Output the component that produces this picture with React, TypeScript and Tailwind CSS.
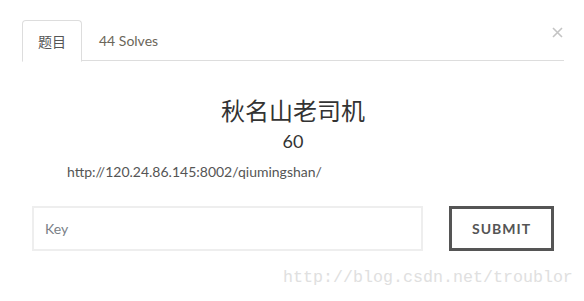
export default function App() {
  return (
    <div className="relative w-[584px] h-[301px] bg-white font-['Lato','Noto_Sans_CJK_SC',sans-serif] text-[#333]">
      {/* Close */}
      <button className="absolute left-[552px] top-[27px] w-[11px] h-[11px]" title="Close">
        <svg viewBox="0 0 11 11" className="w-[11px] h-[11px]">
          <path d="M1 1 L10 10 M10 1 L1 10" stroke="#c4c4c4" strokeWidth="1.6" />
        </svg>
      </button>

      <div className="pt-[20px] pl-[22px] pr-[20px]">
        {/* Tabs */}
        <div className="flex h-[41px] border-b border-[#ddd]">
          <div className="-mb-px flex h-[42px] items-center rounded-t-[4px] border border-[#ddd] border-b-white bg-white px-[15px] text-[14px] text-[#555]">
            题目
          </div>
          <div className="ml-[2px] flex h-[41px] items-center px-[15px] text-[14px] text-[#6b6659]">
            44 Solves
          </div>
        </div>

        {/* Challenge */}
        <div className="mt-[37px] text-center">
          <h3 className="text-[24px] leading-[26px] text-[#333]">秋名山老司机</h3>
          <h4 className="mt-[4px] text-[18px] leading-[27px] text-[#333]">60</h4>
        </div>
        <p className="mt-[7px] pl-[45px] text-[14px] leading-[20px] text-[#555]">
          http://120.24.86.145:8002/qiumingshan/
        </p>

        {/* Key form */}
        <div className="mt-[24px] flex items-start">
          <input
            className="ml-[10px] h-[45px] w-[391px] border-2 border-[#eee] px-[11px] text-[14px] text-[#555] outline-none placeholder:text-[#7a7f87]"
            placeholder="Key"
          />
          <button className="ml-[26px] h-[45px] w-[105px] border-[3px] border-[#555] text-[14px] font-bold tracking-[1px] text-[#555]">
            SUBMIT
          </button>
        </div>
      </div>

      {/* Watermark */}
      <div className="absolute left-[283px] top-[266px] font-['Liberation_Mono',monospace] text-[16.67px] leading-[24px] text-[#e0e0e0]">
        http://blog.csdn.net/troublor
      </div>
    </div>
  );
}
